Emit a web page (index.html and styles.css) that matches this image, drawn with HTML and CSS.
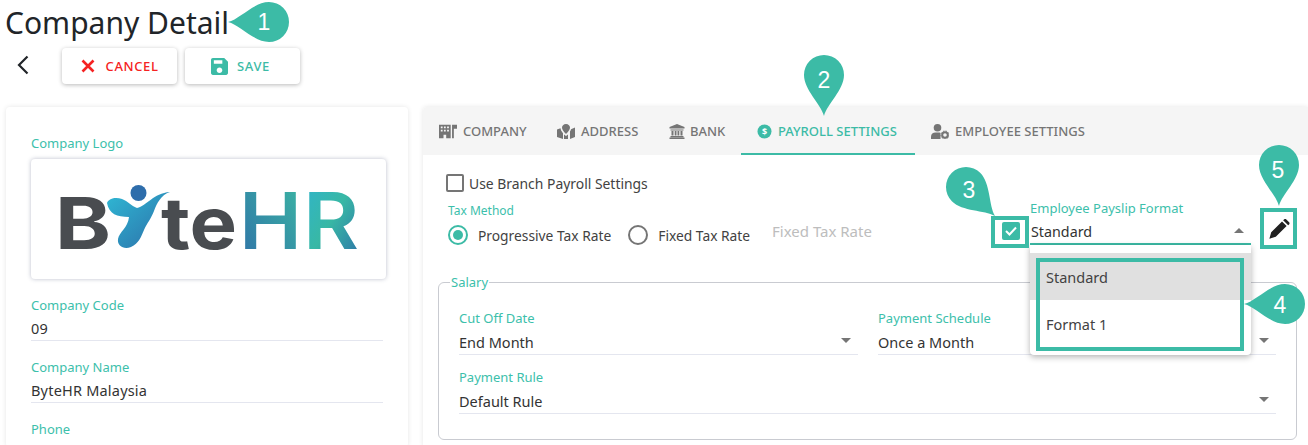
FILE: index.html
```html
<!DOCTYPE html>
<html lang="en">
<head>
    <meta charset="UTF-8">
    <meta name="viewport" content="width=device-width, initial-scale=1.0">
    <title>Company Detail</title>
    <link rel="stylesheet" href="styles.css">
</head>
<body>
    <div class="page">
        <h1 class="titulo">Company Detail</h1>

        <div class="toolbar">
            <button class="voltar" aria-label="Back">
                <svg width="12" height="20" viewBox="0 0 12 20"><path d="M10.500 1.500 2 10l8.500 8.500" fill="none" stroke="#212529" stroke-width="2.200"/></svg>
            </button>
            <button class="acao cancelar">
                <svg width="14" height="14" viewBox="0 0 14 14"><path d="M1.500 1.500l11 11M12.500 1.500l-11 11" stroke="#f52222" stroke-width="2.600"/></svg>
                CANCEL
            </button>
            <button class="acao salvar">
                <svg width="17" height="17" viewBox="3 3 18 18"><path fill="#3cbba6" d="M17 3H5c-1.110 0-2 .9-2 2v14c0 1.100.89 2 2 2h14c1.100 0 2-.9 2-2V7l-4-4zm-5 16c-1.660 0-3-1.340-3-3s1.340-3 3-3 3 1.340 3 3-1.340 3-3 3zm3-10H6V5.500h9V9z"/></svg>
                SAVE
            </button>
        </div>

        <div class="colunas">
            <!-- coluna da esquerda -->
            <section class="card-empresa">
                <p class="rotulo">Company Logo</p>
                <div class="logo-box">
                    <svg width="340" height="110" viewBox="0 0 340 110">
                        <defs>
                            <linearGradient id="grad-h" x1="0" y1="1" x2="1" y2="0"><stop offset="0" stop-color="#2f6fa8"/><stop offset="1" stop-color="#3cb9a3"/></linearGradient>
                            <linearGradient id="grad-r" x1="0" y1="0" x2="1" y2="1"><stop offset="0" stop-color="#2fb4cf"/><stop offset=".5" stop-color="#38b8a5"/><stop offset="1" stop-color="#2c6ea8"/></linearGradient>
                            <linearGradient id="grad-y" x1="0" y1="0" x2="1" y2="1"><stop offset="0" stop-color="#2fb8d4"/><stop offset="1" stop-color="#2c6ea8"/></linearGradient>
                        </defs>
                        <g transform="translate(20 21)">
                            <text class="logo-txt" x="-4" y="64" fill="#494c50" textLength="56" lengthAdjust="spacingAndGlyphs">B</text>
                            <circle cx="79.500" cy="8" r="8" fill="#2e6dab"/>
                            <path fill="url(#grad-y)" d="M48 18c2-5 9-6 15-4 6 2 9 7 15 9 10-2 16-15 33-16-9 3-13 11-16 19-3 8-7 12-10 19-3 7-5 13-13 17-7 3-14-1-13-8 1-7 10-11 11-22-12 0-20-3-22-14z"/>
                            <text class="logo-txt" x="102" y="64" fill="#494c50" textLength="76" lengthAdjust="spacingAndGlyphs">te</text>
                            <text class="logo-txt logo-hr" x="180" y="64" fill="url(#grad-h)" textLength="63" lengthAdjust="spacingAndGlyphs">H</text>
                            <text class="logo-txt logo-hr" x="244" y="64" fill="url(#grad-r)" textLength="56" lengthAdjust="spacingAndGlyphs">R</text>
                        </g>
                    </svg>
                </div>

                <div class="campo-esq">
                    <p class="rotulo">Company Code</p>
                    <p class="valor">09</p>
                </div>
                <div class="campo-esq">
                    <p class="rotulo">Company Name</p>
                    <p class="valor">ByteHR Malaysia</p>
                </div>
                <div class="campo-esq sem-linha">
                    <p class="rotulo">Phone</p>
                </div>
            </section>

            <!-- coluna da direita -->
            <section class="card-abas">
                <nav class="abas">
                    <a class="aba">
                        <svg width="18" height="15" viewBox="0 0 20 15"><path fill="#757575" fill-rule="evenodd" d="M0 0h13v15H8v-4H5v4H0zM2 2v2h2V2zm3.500 0v2h2V2zM9 2v2h2V2zM2 5.500v2h2v-2zm3.500 0v2h2v-2zm3.500 0v2h2v-2zM14.500 0H20v4.500h-3.500V15h-2z"/></svg>
                        COMPANY
                    </a>
                    <a class="aba">
                        <svg width="18" height="15" viewBox="0 0 18 15"><path fill="#757575" d="M9 0c2.500 0 4 1.800 4 3.700 0 1.600-1.500 3.900-4 6.300-2.500-2.400-4-4.700-4-6.300C5 1.800 6.500 0 9 0zM0 5.500l3.500-1.300.6 2.300L6 9.200V15l-6-2zM18 3.500V13l-5 2V7.500l.7-1.200.3-1zM7 10.500l2 1.500 2-1.500V15H7z"/></svg>
                        ADDRESS
                    </a>
                    <a class="aba aba-banco">
                        <svg width="16" height="15" viewBox="0 0 15 15"><path fill="#757575" d="M7.500 0 15 3v1.500H0V3zM1 5.500h13V6.500H1zM2 7h2v4.500H2zM5.200 7h1.800v4.500H5.200zM8 7h1.800v4.500H8zM11 7h2v4.500h-2zM1 12h13v1.200H1zM0 13.500h15V15H0z"/></svg>
                        BANK
                    </a>
                    <a class="aba ativa">
                        <svg width="15" height="15" viewBox="0 0 15 15"><circle cx="7.500" cy="7.500" r="7" fill="#3cbba6"/><text class="cifrao" x="7.500" y="10.800">$</text></svg>
                        PAYROLL SETTINGS
                    </a>
                    <a class="aba">
                        <svg width="18" height="15" viewBox="0 0 18 15"><circle cx="6.500" cy="3.800" r="3.800" fill="#757575"/><path fill="#757575" d="M0 15v-2.500C0 9.800 2 8.500 4.500 8.500h4c.7 0 1 .3 1 .8v5.700z"/><circle cx="14" cy="11" r="2.800" fill="none" stroke="#757575" stroke-width="2"/><circle cx="14" cy="11" r="4" fill="none" stroke="#757575" stroke-width="1" stroke-dasharray="1.500 1.200"/></svg>
                        EMPLOYEE SETTINGS
                    </a>
                </nav>

                <div class="conteudo">
                    <label class="usar-filial"><span class="caixa"></span>Use Branch Payroll Settings</label>

                    <div class="linha-imposto">
                        <div class="metodo">
                            <p class="rotulo rotulo-peq">Tax Method</p>
                            <div class="radios">
                                <span class="radio marcado"></span><span class="radio-txt">Progressive Tax Rate</span>
                                <span class="radio"></span><span class="radio-txt">Fixed Tax Rate</span>
                            </div>
                        </div>
                        <span class="placeholder">Fixed Tax Rate</span>
                        <span class="caixa-ok">
                            <svg width="12" height="10" viewBox="0 0 12 10"><path d="M1 5l3.500 3.500L11 1.500" fill="none" stroke="#fff" stroke-width="2"/></svg>
                        </span>
                        <div class="formato">
                            <p class="rotulo">Employee Payslip Format</p>
                            <div class="select-aberto">Standard<i class="seta-cima"></i></div>
                        </div>
                        <button class="lapis" aria-label="Edit">
                            <svg width="22" height="22" viewBox="0 0 24 24"><path fill="#212121" d="M1.500 22.500 3.500 15.500 15.300 3.700 20.300 8.700 8.500 20.500zM16.500 2.500l1-1c.8-.7 1.800-.7 2.500 0l3 3c.7.700.7 1.700 0 2.500l-1 1z"/></svg>
                        </button>
                    </div>

                    <fieldset class="salario">
                        <legend>Salary</legend>
                        <div class="grade">
                            <div class="campo">
                                <p class="rotulo">Cut Off Date</p>
                                <div class="select">End Month<i class="seta"></i></div>
                            </div>
                            <div class="campo">
                                <p class="rotulo">Payment Schedule</p>
                                <div class="select">Once a Month<i class="seta"></i></div>
                            </div>
                            <div class="campo largo">
                                <p class="rotulo">Payment Rule</p>
                                <div class="select">Default Rule<i class="seta"></i></div>
                            </div>
                        </div>
                    </fieldset>
                </div>
            </section>
        </div>
    </div>

    <!-- menu aberto do formato -->
    <ul class="menu">
        <li class="selecionado">Standard</li>
        <li>Format 1</li>
    </ul>

    <!-- marcas de destaque por cima da tela -->
    <div class="destaque d-check"></div>
    <div class="destaque d-menu"></div>
    <div class="destaque d-lapis"></div>

    <svg class="marcas" width="1308" height="445" viewBox="0 0 1308 445">
        <defs>
            <path id="gota" d="M0 41C-3 29-20 15-20 0A20 20 0 1 1 20 0C20 15 3 29 0 41Z" fill="#3cbba6"/>
        </defs>
        <use href="#gota" transform="translate(269 22) rotate(90)"/>
        <use href="#gota" transform="translate(824 75)"/>
        <use href="#gota" transform="translate(966 187) rotate(-45)"/>
        <use href="#gota" transform="translate(1285 304) rotate(90)"/>
        <use href="#gota" transform="translate(1279 165)"/>
        <text x="264" y="30">1</text>
        <text x="824" y="88">2</text>
        <text x="969" y="198">3</text>
        <text x="1280" y="313">4</text>
        <text x="1278" y="178">5</text>
    </svg>
</body>
</html>
```

FILE: styles.css
```css
* {
    box-sizing: border-box;
}

body {
    font-family: "Noto Sans", Arial, sans-serif;
    background-color: #fff;
    color: #333;
    margin: 0;
    height: 445px;
    overflow: hidden;
}

p {
    margin: 0;
}

.page {
    padding: 0 0 0 6px;
}

.titulo {
    height: 48px;
    margin: 0 0 0 -1px;
    font-size: 30px;
    font-weight: 400;
    line-height: 46px;
    color: #212529;
}

.toolbar {
    display: flex;
    align-items: center;
    height: 36px;
}

.voltar {
    width: 56px;
    height: 36px;
    padding: 0 0 0 11px;
    border: 0;
    background: none;
    text-align: left;
}

.acao {
    display: flex;
    align-items: center;
    justify-content: center;
    gap: 11px;
    width: 115px;
    height: 36px;
    margin-right: 8px;
    padding: 0;
    border: 0;
    border-radius: 4px;
    background-color: #fff;
    font-family: inherit;
    font-size: 13px;
    font-weight: 500;
    letter-spacing: .6px;
    box-shadow: 0 1px 4px rgba(0, 0, 0, .28);
}

.cancelar {
    color: #f52222;
}

.salvar {
    gap: 9px;
    color: #3cbba6;
    padding-right: 4px;
}

.colunas {
    display: flex;
    gap: 15px;
    margin-top: 23px;
}

.card-empresa {
    width: 402px;
    height: 340px;
    padding: 27px 25px 0;
    border-radius: 4px;
    box-shadow: 0 0 5px rgba(0, 0, 0, .1);
}

.rotulo {
    font-size: 13px;
    line-height: 18px;
    color: #3cc0ab;
}

.logo-box {
    display: flex;
    align-items: center;
    justify-content: center;
    width: 355px;
    height: 120px;
    margin-top: 7px;
    border-radius: 4px;
    box-shadow: 0 0 4px rgba(60, 70, 110, .35);
}

.logo-txt {
    font-family: Inter, "Noto Sans", sans-serif;
    font-size: 72px;
    font-weight: 700;
}

.logo-hr {
    font-size: 78px;
    font-weight: 600;
}

.campo-esq {
    width: 352px;
    height: 62px;
    padding-top: 17px;
    border-bottom: 1px solid #e4e6ef;
}

.sem-linha {
    border-bottom: 0;
}

.valor {
    margin-top: 3px;
    font-size: 14.500px;
    line-height: 22px;
    letter-spacing: .2px;
    color: #333;
}

.card-abas {
    flex: 1;
    height: 340px;
    box-shadow: 0 0 5px rgba(0, 0, 0, .1);
    border-radius: 4px 0 0 0;
}

.abas {
    display: grid;
    grid-template-columns: 118px 112px 88px 174px 188px;
    height: 48px;
    background-color: #f5f5f5;
    border-radius: 4px 0 0 0;
}

.aba {
    display: flex;
    align-items: center;
    gap: 6px;
    height: 48px;
    padding: 0 0 0 16px;
    font-size: 13px;
    font-weight: 500;
    white-space: nowrap;
    color: #757575;
}

.aba-banco {
    gap: 5px;
}

.ativa {
    color: #3cbba6;
    border-bottom: 2px solid #3cbba6;
    padding-top: 2px;
}

.cifrao {
    font-family: "Noto Sans", sans-serif;
    font-size: 9px;
    font-weight: 700;
    fill: #fff;
    text-anchor: middle;
}

.conteudo {
    padding: 19px 11px 0 15px;
}

.usar-filial {
    display: flex;
    align-items: center;
    gap: 5px;
    height: 18px;
    margin-left: 8px;
    font-size: 13.900px;
    color: #424242;
}

.caixa {
    width: 18px;
    height: 18px;
    border: 2px solid #757575;
    border-radius: 2px;
}

.linha-imposto {
    display: flex;
    align-items: flex-start;
    height: 73px;
    margin-top: 8px;
}

.metodo {
    width: 324px;
    margin: 2px 0 0 10px;
}

.rotulo-peq {
    font-size: 12px;
    line-height: 18px;
}

.radios {
    display: flex;
    align-items: center;
    margin-top: 5px;
}

.radio {
    position: relative;
    width: 20px;
    height: 20px;
    border: 2px solid #757575;
    border-radius: 50%;
}

.marcado {
    border-color: #3cbba6;
}

.marcado::after {
    content: "";
    position: absolute;
    inset: 3px;
    border-radius: 50%;
    background-color: #3cbba6;
}

.radio-txt {
    margin: 0 17px 0 10px;
    font-size: 13.800px;
    color: #424242;
}

.placeholder {
    width: 230px;
    margin-top: 21px;
    font-size: 15px;
    color: #bdbdbd;
}

.caixa-ok {
    display: flex;
    align-items: center;
    justify-content: center;
    width: 18px;
    height: 18px;
    margin-top: 22px;
    border-radius: 2px;
    background-color: #3cbba6;
}

.formato {
    width: 221px;
    margin: -1px 0 0 10px;
}

.select-aberto {
    position: relative;
    height: 28px;
    padding-left: 1px;
    font-size: 14.300px;
    line-height: 30px;
    color: #333;
    border-bottom: 2px solid #3cbba6;
}

.seta-cima, .seta {
    position: absolute;
    right: 7px;
    top: 10px;
    border-left: 5px solid transparent;
    border-right: 5px solid transparent;
}

.seta-cima {
    top: 11px;
    border-bottom: 5px solid #757575;
}

.seta {
    top: 10px;
    border-top: 5px solid #757575;
}

.lapis {
    display: block;
    width: 22px;
    height: 22px;
    margin: 18px 0 0 17px;
    padding: 0;
    border: 0;
    background: none;
}

.salario {
    height: 167px;
    margin: 0;
    padding: 0 20px;
    border: 1px solid #c9cbd1;
    border-radius: 6px;
    min-width: 0;
}

.salario legend {
    margin-left: -9px;
    padding: 0 1px;
    font-size: 13px;
    color: #3cc0ab;
}

.grade {
    display: grid;
    grid-template-columns: 399px 398px;
    column-gap: 20px;
    row-gap: 13px;
    margin-top: 18px;
}

.largo {
    grid-column: 1 / 3;
}

.select {
    position: relative;
    height: 27px;
    margin-top: 1px;
    font-size: 14.500px;
    line-height: 28px;
    color: #333;
    border-bottom: 1px solid #e4e6ef;
}

.menu {
    position: absolute;
    left: 1030px;
    top: 245px;
    width: 221px;
    height: 110px;
    margin: 0;
    padding: 8px 0;
    list-style: none;
    background-color: #fff;
    border-radius: 0 0 4px 4px;
    box-shadow: 0 2px 6px rgba(0, 0, 0, .3);
    font-size: 14.500px;
    color: #424242;
}

.menu li {
    height: 47px;
    padding-left: 16px;
    line-height: 49px;
}

.selecionado {
    background-color: #e0e0e0;
}

.destaque {
    position: absolute;
    border: 4px solid #3cbba6;
}

.d-check {
    left: 991px;
    top: 216px;
    width: 38px;
    height: 32px;
}

.d-menu {
    left: 1036px;
    top: 258px;
    width: 208px;
    height: 93px;
}

.d-lapis {
    left: 1260px;
    top: 208px;
    width: 37px;
    height: 41px;
}

.marcas {
    position: absolute;
    left: 0;
    top: 0;
    pointer-events: none;
}

.marcas text {
    font-family: "Liberation Sans", Arial, sans-serif;
    font-size: 23px;
    fill: #fff;
    text-anchor: middle;
}
```
